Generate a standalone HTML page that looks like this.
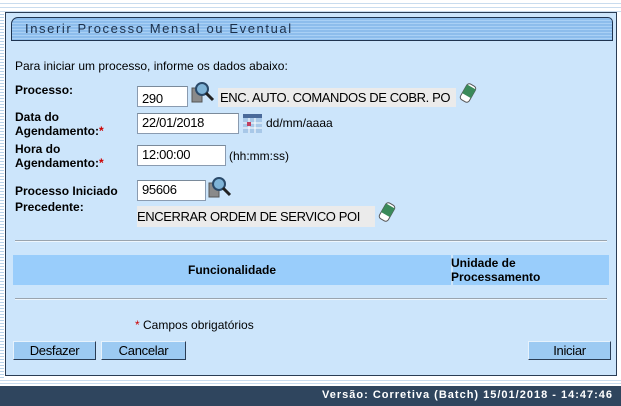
<!DOCTYPE html>
<html><head><meta charset="utf-8"><style>
body{margin:0;width:621px;height:406px;overflow:hidden;background:#fff;font-family:"Liberation Sans",Arial,sans-serif;font-size:12px;color:#000;position:relative}
.a{position:absolute;white-space:nowrap}
.b{font-weight:bold}
.in{position:absolute;background:#fff;border:1px solid #8a9bb0;border-top-color:#7a8a9a;height:19px;box-sizing:border-box;font-size:13px;padding:1px 4px;letter-spacing:-0.3px}
.ro{position:absolute;background:#ebebeb;height:19px;font-size:13px;letter-spacing:-0.4px;padding-top:2px;box-sizing:border-box}
.btn{position:absolute;top:341px;height:19px;background:#9ccaf2;border:1px solid #e6f2fc;border-right-color:#2a3d55;border-bottom-color:#2a3d55;box-sizing:border-box;text-align:center;font-size:13px;line-height:17px;letter-spacing:-0.3px}
.r{color:#c00}
</style></head><body>
<div style="position:absolute;left:0;top:0;width:4px;height:384px;background:repeating-linear-gradient(#fff 0 2px,#b9d3ea 2px 3px)"></div>
<div style="position:absolute;left:0;top:0;width:621px;height:12px;background:repeating-linear-gradient(#fff 0 3px,#c9dcee 3px 4px)"></div>
<div style="position:absolute;left:5px;top:12px;width:612px;height:364px;background:#cce5fb;border:1px solid #2a3d55;box-sizing:border-box"></div>
<div style="position:absolute;left:11px;top:17px;width:602px;height:24px;border:1px solid #1f3450;box-sizing:border-box;border-radius:7px 5px 0 0;background:repeating-linear-gradient(#8dbdec 0 2px,#a9d0f5 2px 3px)"></div>
<div class="a" style="left:25px;top:21px;font-size:13px;letter-spacing:1.6px;color:#1b2f4a">Inserir Processo Mensal ou Eventual</div>
<div class="a" style="left:15px;top:59px">Para iniciar um processo, informe os dados abaixo:</div>
<div class="a b" style="left:15px;top:83px">Processo:</div>
<div class="in" style="left:137px;top:86px;width:51px;height:21px;padding-top:4px">290</div>
<svg style="position:absolute;left:190px;top:80px" width="26" height="26" viewBox="0 0 26 26"><rect x="2" y="8" width="10" height="14" fill="#8a8a8a" stroke="#555"/><circle cx="12" cy="9" r="6" fill="#7fb4d8" stroke="#2a4a6a" stroke-width="2"/><line x1="16" y1="13" x2="23" y2="20" stroke="#222" stroke-width="3"/></svg>
<div class="ro" style="left:218px;top:88px;width:238px;padding-left:2px">ENC. AUTO. COMANDOS DE COBR. PO</div>
<svg style="position:absolute;left:458px;top:82px" width="20" height="22" viewBox="0 0 20 22"><g transform="rotate(30 10 11)"><rect x="5" y="2" width="10" height="18" rx="3" fill="#fff" stroke="#555"/><rect x="5" y="4" width="10" height="10" fill="#3a8a5a"/></g></svg>
<div class="a b" style="left:15px;top:110px">Data do</div>
<div class="a b" style="left:15px;top:124px">Agendamento:<span class="r">*</span></div>
<div class="in" style="left:137px;top:113px;width:102px;height:21px">22/01/2018</div>
<svg style="position:absolute;left:243px;top:114px" width="19" height="19"><rect x="0" y="0" width="19" height="19" fill="#a8c8e8"/><rect x="0" y="0" width="19" height="4" fill="#4a6a9a"/><g stroke="#fff"><line x1="0" y1="9" x2="19" y2="9"/><line x1="0" y1="14" x2="19" y2="14"/><line x1="6" y1="4" x2="6" y2="19"/><line x1="12" y1="4" x2="12" y2="19"/></g><rect x="4" y="8" width="4" height="4" fill="#c04060"/></svg>
<div class="a" style="left:266px;top:116px">dd/mm/aaaa</div>
<div class="a b" style="left:15px;top:142px">Hora do</div>
<div class="a b" style="left:15px;top:156px">Agendamento:<span class="r">*</span></div>
<div class="in" style="left:137px;top:145px;width:89px;height:21px">12:00:00</div>
<div class="a" style="left:229px;top:149px">(hh:mm:ss)</div>
<div class="a b" style="left:15px;top:184px">Processo Iniciado</div>
<div class="a b" style="left:15px;top:200px">Precedente:</div>
<div class="in" style="left:137px;top:180px;width:69px;height:21px">95606</div>
<svg style="position:absolute;left:207px;top:175px" width="26" height="26" viewBox="0 0 26 26"><rect x="2" y="8" width="10" height="14" fill="#8a8a8a" stroke="#555"/><circle cx="12" cy="9" r="6" fill="#7fb4d8" stroke="#2a4a6a" stroke-width="2"/><line x1="16" y1="13" x2="23" y2="20" stroke="#222" stroke-width="3"/></svg>
<div class="ro" style="left:137px;top:206px;width:238px;height:21px;padding-top:3px">ENCERRAR ORDEM DE SERVICO POI</div>
<svg style="position:absolute;left:377px;top:201px" width="20" height="22" viewBox="0 0 20 22"><g transform="rotate(30 10 11)"><rect x="5" y="2" width="10" height="18" rx="3" fill="#fff" stroke="#555"/><rect x="5" y="4" width="10" height="10" fill="#3a8a5a"/></g></svg>
<div style="position:absolute;left:15px;top:240px;width:592px;height:1px;background:#9aa4ae;border-bottom:1px solid #eef6fd"></div>
<div style="position:absolute;left:13px;top:255px;width:438px;height:30px;background:#99cdfb"></div>
<div style="position:absolute;left:453px;top:255px;width:156px;height:30px;background:#99cdfb"></div>
<div class="a b" style="left:188px;top:263px">Funcionalidade</div>
<div class="a b" style="left:451px;top:256px">Unidade de</div>
<div class="a b" style="left:451px;top:270px">Processamento</div>
<div style="position:absolute;left:15px;top:298px;width:592px;height:1px;background:#9aa4ae;border-bottom:1px solid #eef6fd"></div>
<div class="a" style="left:135px;top:318px"><span class="r">*</span> Campos obrigatórios</div>
<div class="btn" style="left:13px;width:83px">Desfazer</div>
<div class="btn" style="left:101px;width:85px">Cancelar</div>
<div class="btn" style="left:528px;width:83px">Iniciar</div>
<div style="position:absolute;left:0;top:378px;width:621px;height:8px;background:repeating-linear-gradient(#fff 0 2px,#c9dcee 2px 3px)"></div>
<div style="position:absolute;left:0;top:386px;width:621px;height:20px;background:#2f455e"></div>
<div class="a b" style="right:8px;top:389px;color:#fff;font-size:11px;letter-spacing:1px">Versão: Corretiva (Batch) 15/01/2018 - 14:47:46</div>
</body></html>
